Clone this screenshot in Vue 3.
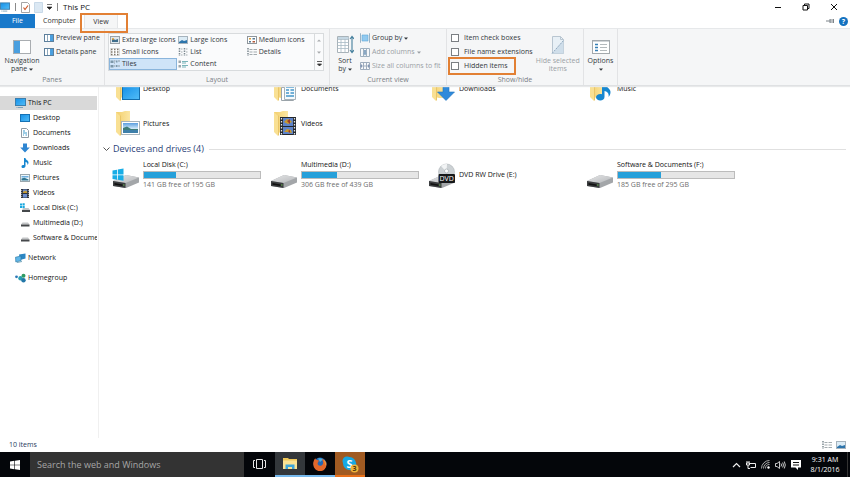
<script setup>
import { ref } from 'vue'

const layouts = ['Extra large icons', 'Large icons', 'Medium icons', 'Small icons', 'List', 'Details', 'Tiles', 'Content']
const layoutIcons = ['pic', 'pic2', 'med', 'small', 'list', 'details', 'tiles', 'content']
const selected = ref('Tiles')

const toggles = ref([
  { label: 'Item check boxes', on: false },
  { label: 'File name extensions', on: false },
  { label: 'Hidden items', on: false, marked: true },
])

const places = [
  { name: 'Desktop', icon: 'desktop' },
  { name: 'Documents', icon: 'document' },
  { name: 'Downloads', icon: 'download' },
  { name: 'Music', icon: 'music' },
  { name: 'Pictures', icon: 'picture' },
  { name: 'Videos', icon: 'video' },
]
const sideDrives = [
  { name: 'Local Disk (C:)', icon: 'windisk' },
  { name: 'Multimedia (D:)', icon: 'disk' },
  { name: 'Software & Documents (F:)', icon: 'disk' },
]
const drives = [
  { name: 'Local Disk (C:)', icon: 'winhdd', free: 141, total: 195 },
  { name: 'Multimedia (D:)', icon: 'hdd', free: 306, total: 439 },
  { name: 'DVD RW Drive (E:)', icon: 'dvd' },
  { name: 'Software & Documents (F:)', icon: 'hdd', free: 185, total: 295 },
]
const used = (d) => Math.round((1 - d.free / d.total) * 100) + '%'
const search = ref('')
</script>

<template>
  <svg class="defs" aria-hidden="true">
    <defs>
      <linearGradient id="gScreen" x1="0" y1="0" x2="1" y2="1">
        <stop offset="0" stop-color="#1590e8" /><stop offset="1" stop-color="#52bdf7" />
      </linearGradient>
      <linearGradient id="gFolder" x1="0" y1="0" x2="1" y2="0">
        <stop offset="0" stop-color="#f3cf6c" /><stop offset="1" stop-color="#fbe6a3" />
      </linearGradient>
      <linearGradient id="gMetal" x1="0" y1="0" x2="1" y2="1">
        <stop offset="0" stop-color="#e6e7e8" /><stop offset="1" stop-color="#b5b7ba" />
      </linearGradient>
      <linearGradient id="gSky" x1="0" y1="0" x2="0" y2="1">
        <stop offset="0" stop-color="#5b9ede" /><stop offset=".6" stop-color="#d8eefb" />
      </linearGradient>
    </defs>
    <symbol id="pc" viewBox="0 0 11 10">
      <rect x=".5" y=".5" width="10" height="7" fill="url(#gScreen)" stroke="#3b7fae" />
      <path d="M3 9.500h5M1.500 9.500h1" stroke="#7da3bb" />
    </symbol>
    <symbol id="desktop" viewBox="0 0 10 10">
      <rect x=".5" y="1.500" width="9" height="7" fill="url(#gScreen)" stroke="#1672b5" />
    </symbol>
    <symbol id="document" viewBox="0 0 10 10">
      <path d="M1.500.5h5l2 2v7h-7z" fill="#fff" stroke="#8f9aa3" />
      <path d="M3 3h2M3 5h4M3 7h1M5.500 7H7" stroke="#3a9acb" stroke-width="1.200" />
    </symbol>
    <symbol id="download" viewBox="0 0 10 10">
      <path d="M3 .5h4V4.500H9.800L5 9.500.2 4.500H3z" fill="#2e86d2" />
    </symbol>
    <symbol id="music" viewBox="0 0 10 10">
      <path d="M4 0h1.500c0 2 3 2.200 3 4.500 0 1-.5 2-1 2.500.2-2-.8-2.700-2-3v4C5.500 9.300 4.500 10 3.300 10S1.500 9.300 1.500 8.400 2.600 6.800 4 7z" fill="#1787d0" />
    </symbol>
    <symbol id="picture" viewBox="0 0 10 10">
      <rect x=".5" y="1.500" width="9" height="7" fill="#eef7fc" stroke="#9aa7ad" />
      <path d="M1.500 3h7v1.500h-7z" fill="#6faede" /><path d="M1.500 5.500l3-.8 4 1.800v1h-7z" fill="#2e7590" />
    </symbol>
    <symbol id="video" viewBox="0 0 10 10">
      <path d="M1 1h8v9H1z" fill="#2e3440" /><path d="M3 1.500h4V5H3zM3 6h4v3.500H3z" fill="#6d8fd1" />
      <path d="M3 4l2-1.500 2 1V5H3z" fill="#c79c33" /><path d="M1.700 2v8M8.300 2v8" stroke="#d5d5d5" stroke-width=".8" stroke-dasharray="1 1" />
    </symbol>
    <symbol id="disk" viewBox="0 0 10 10">
      <path d="M2.500 4.500h5.500l1.500 2H1z" fill="#c3c5c7" /><path d="M1 6.500h8.500v2H1z" fill="#45484b" />
    </symbol>
    <symbol id="windisk" viewBox="0 0 10 10">
      <path d="M0 .5h2v2H0zM2.500.2h2.200v2.300H2.500zM0 3h2v2H0zM2.500 3h2.200v2.200H2.500z" fill="#17a7de" />
      <path d="M3.500 5h5L10 7H2z" fill="#c3c5c7" /><path d="M2 7h8v2H2z" fill="#45484b" />
    </symbol>
    <symbol id="network" viewBox="0 0 11 10">
      <path d="M4 1.500L10.500.5v5L5 7z" fill="#2b86c4" /><path d="M.5 4.200L6 3v4.800L.8 9z" fill="#5fb6e8" stroke="#24739f" stroke-width=".6" />
      <path d="M2 9.500l5-1" stroke="#78a8bd" />
    </symbol>
    <symbol id="homegroup" viewBox="0 0 11 10">
      <circle cx="1.500" cy="3.800" r="1.400" fill="#2e79b8" /><circle cx="5.500" cy="5.200" r="2.200" fill="#2a9fb0" />
      <circle cx="8.500" cy="2.800" r="2" fill="#2f9b62" /><circle cx="8.500" cy="7.300" r="2.200" fill="#2377a8" />
    </symbol>

    <symbol id="folder" viewBox="0 0 28 28">
      <path d="M4 2h6l3-1h5v22l-7 0-7-2z" fill="url(#gFolder)" />
      <path d="M4 2l4 4v20l-4-4z" fill="#f9e093" /><path d="M8 6l1-1v20l-1 1z" fill="#e9c568" />
    </symbol>
    <symbol id="b-desktop" viewBox="0 0 28 28">
      <use href="#folder" /><rect x="10.500" y="11.500" width="17" height="13" fill="url(#gScreen)" stroke="#136eae" />
    </symbol>
    <symbol id="b-document" viewBox="0 0 28 28">
      <use href="#folder" /><path d="M11.500 12.500h12v13h-12z" fill="#fff" stroke="#9aa3a9" /><path d="M14.500 9.500h11v15h-11z" fill="#f5fafc" stroke="#a7b2b9" />
      <path d="M16 12h8M16 15h3M20.500 15H24M16 18h3M20.500 18H24M16 21h8" stroke="#4596c9" stroke-width="1.300" />
    </symbol>
    <symbol id="b-download" viewBox="0 0 28 28">
      <use href="#folder" /><path d="M15 10h6v7h5.500l-8.500 8.500-8.500-8.500H15z" fill="#2f8adb" stroke="#1f72bd" stroke-width=".6" />
    </symbol>
    <symbol id="b-music" viewBox="0 0 28 28">
      <use href="#folder" /><path d="M16 8h2.500c.5 4 6 5 6 9 0 2-.8 4-2 5 .8-3.500-1-5.500-4-6v6c0 2-1.900 3.500-4.200 3.500S10 24.200 10 22.300s2.500-3.800 6-3z" fill="#1787d0" />
    </symbol>
    <symbol id="b-picture" viewBox="0 0 28 28">
      <use href="#folder" /><rect x="9.500" y="11.500" width="18" height="13" fill="#fff" stroke="#a8b4bb" />
      <path d="M11 13h15v10H11z" fill="url(#gSky)" /><path d="M11 18l4-1.500 4 2.500 7 0v1H11z" fill="#3f7d78" /><path d="M11 20h15v3H11z" fill="#3e7fa9" />
    </symbol>
    <symbol id="b-video" viewBox="0 0 28 28">
      <use href="#folder" /><path d="M10 7h16v18H10z" fill="#23272d" /><path d="M13 8h10v8H13zM13 17h10v7H13z" fill="#5d83ca" />
      <path d="M14 12l3-3 3 1 2 2-4 2zM14 22l3-3 4 1 1 3-5-1z" fill="#c99a2d" /><path d="M17 11l3-2v5zM18 21l2-1v3z" fill="#9b3b2d" />
      <path d="M11.500 8v17M24.500 8v17" stroke="#e7e7e7" stroke-width="1.300" stroke-dasharray="1.500 1.500" />
    </symbol>
    <symbol id="hdd" viewBox="0 0 28 28">
      <path d="M1 20l13-6 13 2.500v5L14 27 1 25z" fill="#a3a6a9" /><path d="M1 20l13-6 13 2.500L13.500 22z" fill="url(#gMetal)" />
      <path d="M1 20l12.500 2v5L1 25z" fill="#3b3d3f" /><path d="M2.500 22l8 1.400v1.600l-8-1.200z" fill="#111" /><path d="M11 24h1.500" stroke="#6ad14d" stroke-width=".8" />
    </symbol>
    <symbol id="winhdd" viewBox="0 0 28 28">
      <use href="#hdd" />
      <path d="M.5 9.500l4.500-.8v4.800H.5zM5.800 8.500l5.700-1v6H5.800zM.5 14.300H5v4.500L.5 18zM5.800 14.300h5.700v5.500l-5.700-1z" fill="#18ade6" />
    </symbol>
    <symbol id="dvd" viewBox="0 0 28 28">
      <use href="#hdd" />
      <circle cx="18.500" cy="11" r="8" fill="#ccd1d4" stroke="#b0b5b8" stroke-width=".6" /><path d="M18.500 11L13 5a8 8 0 0 1 6-2z" fill="#f2f4f5" />
      <circle cx="18.500" cy="10" r="2" fill="#fff" stroke="#9ba3a8" stroke-width=".6" />
      <rect x="10.500" y="13" width="16.500" height="9" rx="1" fill="#16181a" />
      <text x="18.700" y="20.200" text-anchor="middle" font-size="7" fill="#fff" font-family="Open Sans, sans-serif">DVD</text>
    </symbol>

    <symbol id="navpane" viewBox="0 0 18 14">
      <rect x=".5" y=".5" width="17" height="13" fill="#fff" stroke="#a9adb1" /><path d="M1 1h6v12H1z" fill="#4a9fdf" />
    </symbol>
    <symbol id="preview" viewBox="0 0 10 8">
      <rect x=".5" y=".5" width="9" height="7" fill="#fff" stroke="#5c7f9c" /><path d="M6 1h3v6H6z" fill="#4a9fdf" /><path d="M3.500 1v6" stroke="#8fa9bc" />
    </symbol>
    <symbol id="pic" viewBox="0 0 10 8">
      <rect x=".5" y=".5" width="9" height="7" fill="#dfe7ec" stroke="#9aa2a8" /><path d="M2 6V3h2l1 1 3-1v3z" fill="#3f6e8c" /><circle cx="3" cy="3" r="1" fill="#d89d37" />
    </symbol>
    <symbol id="pic2" viewBox="0 0 10 8">
      <rect x=".5" y=".5" width="9" height="7" fill="#dcecf6" stroke="#a6b3bd" /><path d="M1 6l3-2 2 1 3-1v3H1z" fill="#2c74ab" />
    </symbol>
    <symbol id="med" viewBox="0 0 10 8">
      <rect x=".5" y=".5" width="9" height="7" fill="#fff" stroke="#8e969c" /><path d="M2 2h2v1.500H2z" fill="#d89d37" /><path d="M5.500 2H8v1.500H5.500zM2 5h2v1.500H2z" fill="#587b93" /><path d="M5.500 5H8v1.500H5.500z" fill="#b45a3a" />
    </symbol>
    <symbol id="small" viewBox="0 0 10 8">
      <path d="M.5.5h9v7h-9z" fill="#fff" stroke="#bbb" stroke-width=".5" /><path d="M1 1.500h9M1 4h9M1 6.500h9" stroke="#7d7568" stroke-width="1.500" stroke-dasharray="1.500 1.500" />
    </symbol>
    <symbol id="list" viewBox="0 0 10 8">
      <path d="M1.500 0v8M6.500 0v8" stroke="#7c8990" stroke-width="1.500" stroke-dasharray="1.500 1" /><path d="M3 1h1.500M3 4h1.500M3 7h1.500M8 1h1.500M8 4h1.500M8 7h1.500" stroke="#a3abaf" />
    </symbol>
    <symbol id="details" viewBox="0 0 10 8">
      <path d="M1 0v8" stroke="#7c8990" stroke-width="1.500" stroke-dasharray="1.500 1" /><path d="M2.500 1.500h3M2.500 4h3M2.500 6.500h3M6.500 1.500H10M6.500 4H10M6.500 6.500H10" stroke="#a3abaf" />
    </symbol>
    <symbol id="tiles" viewBox="0 0 10 8">
      <path d="M.5.5h3v2.500h-3zM.5 5h3v2.500h-3zM6 .5h1.500v2H6zM6 5h1.500v2H6z" fill="#7c97a8" /><path d="M4 1h1.500M4 3h1M4 6h1.500M8 1h2M8 6h2" stroke="#8d9aa1" />
    </symbol>
    <symbol id="content" viewBox="0 0 10 8">
      <path d="M.5.5H3V3H.5zM.5 5H3v2.500H.5z" fill="#9ba7ae" /><path d="M4 1.500h6M4 3h4M4 5.500h6M4 7h4" stroke="#59a3a8" stroke-width=".8" />
    </symbol>
    <symbol id="sort" viewBox="0 0 18 20">
      <path d="M1.500 1.500h11v16h-11z" fill="#fff" stroke="#a8b2b8" /><path d="M1.500 4.500h11M1.500 7.500h11M1.500 10.500h11M1.500 13.500h11M5 1.500v16M9 1.500v16" stroke="#a8bac5" stroke-width=".8" />
      <path d="M2 2h10.500v2H2z" fill="#c5d7e3" /><path d="M16 2v15M14 4l2-2.500L18 4M14 15l2 2.500 2-2.500" fill="none" stroke="#447f9d" stroke-width="1.100" />
    </symbol>
    <symbol id="group" viewBox="0 0 10 10">
      <path d="M1 .5H.5v9H1M9 .5h.5v9H9" fill="none" stroke="#9bb4c6" /><path d="M2 2h6v6H2z" fill="#92caf0" stroke="#5ea8d8" stroke-width=".6" />
    </symbol>
    <symbol id="addcol" viewBox="0 0 10 10">
      <path d="M.5 1.500h9v8h-9zM3.500 1v8M6.500 1v8" fill="#f6f8fa" stroke="#9fb1c0" /><path d="M4 3h2v3h1L5 8.500 3 6h1z" fill="#8aa8c4" />
    </symbol>
    <symbol id="sizecol" viewBox="0 0 10 10">
      <path d="M.5 1.500h9v7h-9zM3.500 1v8M6.500 1v8M1 5h9" fill="#f6f8fa" stroke="#9fadbd" /><path d="M0 5l2-2v4zM10 5L8 3v4z" fill="#8396b4" />
    </symbol>
    <symbol id="hide" viewBox="0 0 16 20">
      <path d="M2.500 1.500h8l3 3v14h-11z" fill="#e8f0f6" stroke="#b9c6d1" /><path d="M2.500 18L13.500 5v13.500h-11z" fill="#cfdeea" /><path d="M2 18.500L14 5" stroke="#91a9bf" stroke-dasharray="2 1" />
      <path d="M10.500 1.500v3h3" fill="none" stroke="#b9c6d1" />
    </symbol>
    <symbol id="options" viewBox="0 0 18 14">
      <rect x=".5" y=".5" width="17" height="13" fill="#fff" stroke="#a3a9ad" /><path d="M1 1.500h16" stroke="#d1d5d8" /><path d="M3 4.500h3M3 7.500h3M3 10.500h3" stroke="#377fb5" stroke-width="1.600" /><path d="M8 4.500h7M8 7.500h7M8 10.500h7" stroke="#b4babd" />
    </symbol>
    <symbol id="caret" viewBox="0 0 4 3"><path d="M0 .5h4L2 2.700z" fill="currentColor" /></symbol>
  </svg>

  <div class="window">
    <header class="title">
      <svg class="i-pc"><use href="#pc" /></svg>
      <i class="bar"></i>
      <button class="plain" aria-label="Properties">
        <svg width="9" height="11" viewBox="0 0 9 11"><path d="M.5.5h6l2 2v8h-8z" fill="#fff" stroke="#a5a5a5" /><path d="M2.500 5.500l1.500 2L7 3.500" fill="none" stroke="#cf5a2a" stroke-width="1.200" /></svg>
      </button>
      <button class="plain" aria-label="New folder">
        <svg width="9" height="11" viewBox="0 0 9 11"><path d="M.5.5h8v10h-8z" fill="#dbe8f3" stroke="#c8d9e8" /></svg>
      </button>
      <button class="plain" aria-label="Customize toolbar">
        <svg width="5" height="6" viewBox="0 0 5 6"><path d="M0 .5h5M0 3h5L2.500 5.500z" stroke="#222" stroke-width=".6" fill="#222" /></svg>
      </button>
      <i class="bar"></i>
      <h1>This PC</h1>
      <nav class="sys">
        <button class="plain" aria-label="Minimize"><svg width="8" height="8" viewBox="0 0 8 8"><path d="M1 4.500h6" stroke="#111" /></svg></button>
        <button class="plain" aria-label="Restore"><svg width="8" height="8" viewBox="0 0 8 8"><path d="M1 2.500h4.500v4.500H1zM2.500 2.500v-1.500H7v4.500H5.500" fill="none" stroke="#111" /></svg></button>
        <button class="plain" aria-label="Close"><svg width="8" height="8" viewBox="0 0 8 8"><path d="M1 1l6 6M7 1L1 7" stroke="#111" /></svg></button>
      </nav>
    </header>

    <nav class="tabs">
      <button class="tab file">File</button>
      <button class="tab computer">Computer</button>
      <div class="view-wrap"><button class="tab view">View</button><span class="mark"></span></div>
      <div class="help">
        <button class="plain" aria-label="Pin ribbon"><svg width="8" height="6" viewBox="0 0 8 6"><path d="M0 3h4M4 1v4M4 2h3.500v2H4M7.500 1v4" fill="none" stroke="#7d848a" /></svg></button>
        <button class="plain" aria-label="Help"><svg width="9" height="9" viewBox="0 0 9 9"><circle cx="4.500" cy="4.500" r="4.500" fill="#1472c0" /><text x="4.500" y="7" font-size="7" font-weight="700" text-anchor="middle" fill="#fff" font-family="Open Sans, sans-serif">?</text></svg></button>
      </div>
    </nav>

    <section class="ribbon">
      <div class="group g-panes">
        <div class="body">
          <button class="big"><svg class="w18"><use href="#navpane" /></svg><span>Navigation<br />pane <svg class="caret"><use href="#caret" /></svg></span></button>
          <div class="stack panes">
            <button class="row"><svg class="w10"><use href="#preview" /></svg>Preview pane</button>
            <button class="row"><svg class="w10"><use href="#preview" /></svg>Details pane</button>
          </div>
        </div>
        <h2>Panes</h2>
      </div>
      <div class="group g-layout">
        <div class="body">
          <div class="gallery">
            <div class="options">
              <button v-for="(l, n) in layouts" :key="l" :class="['row', { on: selected === l }]" @click="selected = l">
                <svg class="w10"><use :href="'#' + layoutIcons[n]" /></svg>{{ l }}
              </button>
            </div>
            <div class="scroller">
              <button class="plain" aria-label="Scroll up"><svg width="4" height="3" viewBox="0 0 4 3"><path d="M0 2.500h4L2 .5z" fill="#a8abad" /></svg></button>
              <button class="plain" aria-label="Scroll down"><svg class="caret dim"><use href="#caret" /></svg></button>
              <button class="plain" aria-label="More layouts"><svg width="5" height="6" viewBox="0 0 5 6"><path d="M0 .5h5M.5 3h4L2.500 5z" stroke="#333" stroke-width=".8" fill="#333" /></svg></button>
            </div>
          </div>
        </div>
        <h2>Layout</h2>
      </div>
      <div class="group g-current">
        <div class="body">
          <button class="big sort"><svg class="w18 tall"><use href="#sort" /></svg><span>Sort<br />by <svg class="caret"><use href="#caret" /></svg></span></button>
          <div class="stack">
            <button class="row"><svg class="s10"><use href="#group" /></svg>Group by <svg class="caret"><use href="#caret" /></svg></button>
            <button class="row" disabled><svg class="s10"><use href="#addcol" /></svg>Add columns <svg class="caret"><use href="#caret" /></svg></button>
            <button class="row" disabled><svg class="s10"><use href="#sizecol" /></svg>Size all columns to fit</button>
          </div>
        </div>
        <h2>Current view</h2>
      </div>
      <div class="group g-show">
        <div class="body">
          <div class="stack checks">
            <label v-for="t in toggles" :key="t.label" class="check"><input v-model="t.on" type="checkbox" />{{ t.label }}<span v-if="t.marked" class="mark"></span></label>
          </div>
          <button class="big hide" disabled><svg class="w16 tall"><use href="#hide" /></svg><span>Hide selected<br />items</span></button>
        </div>
        <h2>Show/hide</h2>
      </div>
      <div class="group g-options">
        <div class="body">
          <button class="big"><svg class="w18"><use href="#options" /></svg><span>Options<br /><svg class="caret"><use href="#caret" /></svg></span></button>
        </div>
      </div>
    </section>

    <div class="explorer">
      <aside class="side">
        <a href="#" class="current"><svg class="w11"><use href="#pc" /></svg>This PC</a>
        <a v-for="p in [...places, ...sideDrives]" :key="p.name" href="#" class="child"><svg class="s10"><use :href="'#' + p.icon" /></svg>{{ p.name }}</a>
        <a href="#" class="root"><svg class="w11"><use href="#network" /></svg>Network</a>
        <a href="#" class="root"><svg class="w11"><use href="#homegroup" /></svg>Homegroup</a>
      </aside>
      <main class="content">
        <div class="tiles folders">
          <a v-for="p in places" :key="p.name" href="#" class="tile"><svg class="s28"><use :href="'#b-' + p.icon" /></svg>{{ p.name }}</a>
        </div>
        <h3><svg width="7" height="5" viewBox="0 0 7 5"><path d="M.5.5l3 3 3-3" fill="none" stroke="#555" /></svg>Devices and drives (4)<i></i></h3>
        <div class="tiles">
          <a v-for="d in drives" :key="d.name" href="#" class="tile drive">
            <svg class="s28"><use :href="'#' + d.icon" /></svg>
            <span class="info">
              <span>{{ d.name }}</span>
              <template v-if="d.total">
                <span class="meter"><span :style="{ width: used(d) }"></span></span>
                <span class="free">{{ d.free }} GB free of {{ d.total }} GB</span>
              </template>
            </span>
          </a>
        </div>
      </main>
    </div>

    <div class="status">
      <span>10 items</span>
      <div>
        <button class="plain" aria-label="Details view"><svg class="w10"><use href="#details" /></svg></button>
        <button class="plain active" aria-label="Large icons view"><svg class="w10"><use href="#pic2" /></svg></button>
      </div>
    </div>

    <footer class="taskbar">
      <button class="task" aria-label="Start"><svg width="10" height="10" viewBox="0 0 10 10"><path d="M0 1.400l4.400-.6v3.900H0zM5 .7l5-.7v4.700H5zM0 5.300h4.400v3.900L0 8.600zM5 5.300h5V10l-5-.7z" fill="#fff" /></svg></button>
      <input v-model="search" class="search" type="text" placeholder="Search the web and Windows" aria-label="Search the web and Windows" />
      <button class="task" aria-label="Task view"><svg width="13" height="10" viewBox="0 0 13 10"><path d="M3.500.5h6v9h-6zM2 1.500H.5v7H2M11 1.500h1.500v7H11" fill="none" stroke="#e8e8e8" /></svg></button>
      <button class="task open" aria-label="File Explorer"><svg width="14" height="13" viewBox="0 0 14 13"><path d="M0 1h5l1 1h8v10H0z" fill="#f0c859" /><path d="M0 3.500h14V12H0z" fill="#fbe394" /><path d="M2.500 12V7.500h9V12h-2.500V10H5v2z" fill="#3ea6da" /></svg></button>
      <button class="task run" aria-label="Firefox"><svg width="14" height="14" viewBox="0 0 14 14"><circle cx="7" cy="7" r="6.500" fill="#2668b4" /><path d="M5 1.500a5 5 0 0 1 5 1L7 5z" fill="#4bb3e3" /><path d="M.6 4.500C1 3 1.600 2 2.500 1.300c0 1 .5 1.500 1.500 1.700l2 .5-1 2c-1 .8-.2 3.500 2.500 3.200 2-.2 3-2 2.500-4C9.500 3 9 2.500 9 2c3 1 4.700 3 4.500 5.500A6.600 6.600 0 0 1 .3 7.600C.2 6.500.3 5.500.6 4.500z" fill="#e4682a" /><path d="M10.500 2.500c2 1.500 2.800 4 1.500 6.500.3-2-.2-4.500-1.500-6.500z" fill="#f8c445" /></svg></button>
      <button class="task alert" aria-label="Skype"><svg width="18" height="18" viewBox="0 0 18 18"><circle cx="6" cy="6" r="4.500" fill="#16a9e5" /><circle cx="10.500" cy="10.500" r="5" fill="#16a9e5" /><circle cx="8.500" cy="8.500" r="6.500" fill="#16a9e5" /><text x="8.500" y="12.500" font-size="11" font-weight="700" text-anchor="middle" fill="#fff" font-family="Open Sans, sans-serif">S</text><circle cx="13.500" cy="13.500" r="4" fill="#f0b43a" /><text x="13.500" y="16" font-size="7" font-weight="700" text-anchor="middle" fill="#4b3510" font-family="Open Sans, sans-serif">3</text></svg></button>
      <div class="tray">
        <svg width="9" height="6" viewBox="0 0 9 6"><path d="M1 5l3.500-3.500L8 5" fill="none" stroke="#eee" stroke-width="1.200" /></svg>
        <svg width="10" height="8" viewBox="0 0 10 8"><path d="M3.500 2.500h6v4h-5M1 0v2M3 0v2M.5 2h3v2h-3zM2 4v3.500h2" fill="none" stroke="#eee" /></svg>
        <svg width="9" height="9" viewBox="0 0 9 9"><path d="M.5 8.500a8 8 0 0 1 8-8M2.500 8.500a6 6 0 0 1 6-6M4.500 8.500a4 4 0 0 1 4-4" fill="none" stroke="#aaa" /><circle cx="7.500" cy="7.500" r="1.200" fill="#fff" /></svg>
        <svg width="11" height="8" viewBox="0 0 11 8"><path d="M.5 2.500H2L4.500.5v7L2 5.500H.5zM6 2.500q1 1.500 0 3M7.700 1.500q1.500 2.500 0 5M9.300.5q2 3.500 0 7" fill="none" stroke="#ddd" stroke-width=".9" /></svg>
        <svg width="10" height="10" viewBox="0 0 10 10"><path d="M0 0h10v7.500H7V10L4.500 7.500H0z" fill="#fff" /><path d="M2 2.500h6M2 5h6" stroke="#111" /></svg>
        <time>9:31 AM<br />8/1/2016</time>
      </div>
    </footer>
  </div>
</template>

<style>
body { background: #fff; }
</style>

<style scoped>
.window { display: flex; flex-direction: column; height: 100vh; overflow: hidden; background: #fff; color: #111; font: 7px/10px "Open Sans", "Noto Sans", sans-serif; }
.window *, .window *::before { box-sizing: border-box; }
.defs { position: absolute; width: 0; height: 0; }
button { display: flex; align-items: center; justify-content: center; margin: 0; padding: 0; border: 0; background: none; color: inherit; font: inherit; }
svg { flex: none; }
a { color: inherit; text-decoration: none; }
h1, h2, h3 { margin: 0; font: inherit; }
.w10 { width: 10px; height: 8px; }
.s10 { width: 10px; height: 10px; }
.w11 { width: 11px; height: 10px; }
.w16 { width: 16px; height: 14px; }
.w18 { width: 18px; height: 14px; }
.s28 { width: 28px; height: 28px; }
.w16.tall, .w18.tall { height: 20px; }
.caret { width: 4px; height: 3px; vertical-align: middle; }
.dim { color: #a8abad; }
.mark { position: absolute; border: 2px solid #e28034; pointer-events: none; }

.title { flex: none; display: flex; align-items: center; height: 14px; gap: 4px; }
.i-pc { width: 10px; height: 10px; }
.title .bar { width: 1px; height: 8px; margin: 0 1px; background: #8a8a8a; }
.title h1 { font-size: 8px; }
.sys { display: flex; gap: 20px; margin-left: auto; padding-right: 12px; }

.tabs { flex: none; display: flex; height: 14px; }
.tab { height: 14px; color: #333; }
.tab.file { width: 35px; background: #1979ca; color: #fff; }
.tab.computer { width: 49px; }
.view-wrap { position: relative; }
.tab.view { width: 34px; border: 1px solid #e3e5e7; border-bottom: 0; background: #f5f6f7; }
.view-wrap .mark { inset: -1px -10px -5px -4px; z-index: 1; }
.help { display: flex; align-items: center; gap: 5px; margin-left: auto; padding-right: 2px; }

.ribbon { position: relative; z-index: 0; flex: none; display: flex; height: 58px; border-top: 1px solid #e6e8ea; border-bottom: 1px solid #dfe1e3; background: #f5f6f7; box-shadow: 0 1px 1px #e8e9ea; color: #33383d; }
.group { display: flex; flex-direction: column; padding-top: 2px; border-right: 1px solid #e2e3e5; }
.group .body { flex: 1; display: flex; align-items: flex-start; min-height: 0; }
.group h2 { height: 10px; color: #7a8086; text-align: center; }
.g-panes { width: 105px; }
.g-layout { width: 225px; }
.g-current { width: 117px; }
.g-show { width: 137px; }
.g-options { width: 34px; }
.big { flex-direction: column; justify-content: flex-end; gap: 3px; height: 42px; line-height: 8px; }
.big .tall { margin-bottom: -1px; }
.g-panes .big { width: 44px; }
.sort { width: 30px; }
.g-options .big { width: 100%; }
.hide { width: 56px; margin-left: auto; }
button:disabled { color: #9a9fa5; }
.stack { display: flex; flex-direction: column; }
.row { justify-content: flex-start; gap: 2px; height: 14px; white-space: nowrap; }
.gallery { display: flex; width: 216px; height: 38px; margin: 2px 0 0 3px; border: 1px solid #d8dbdd; background: #fafbfc; }
.options { flex: 1; display: grid; grid-template-columns: repeat(3, 1fr); grid-template-rows: repeat(3, 12px); }
.options .row { height: 12px; padding-left: 1px; }
.options .row.on { border: 1px solid #8ab5dc; background: #cfe4f8; padding-left: 0; }
.scroller { display: grid; grid-template-rows: repeat(3, 12px); width: 9px; border-left: 1px solid #d8dbdd; }
.checks { padding-left: 4px; }
.check { position: relative; display: flex; align-items: center; gap: 5px; height: 14px; white-space: nowrap; }
.check input { appearance: none; width: 8px; height: 8px; margin: 0; border: 1px solid #7b7f83; background: #fff; }
.check input:checked { background: #1979ca; }
.check .mark { inset: -2px auto -2px -3px; width: 68px; }

.explorer { flex: 1; display: flex; min-height: 0; }
.side { flex: none; width: 99px; padding: 10px 1px 0 0; border-right: 1px solid #f0f0f0; overflow: hidden; }
.side a { display: flex; align-items: center; gap: 3px; height: 15px; padding-left: 15px; white-space: nowrap; overflow: hidden; }
.side .child { padding-left: 20px; }
.side .current { height: 14px; gap: 2px; background: #d9d9d9; }
.side .root { gap: 2px; margin-top: 5px; }
.content { flex: 1; min-width: 0; padding: 0 4px; overflow: hidden; }
.tiles { display: grid; grid-template-columns: repeat(auto-fill, 158px); padding-left: 9px; }
.folders { margin-top: -15px; }
.tile { display: flex; align-items: center; gap: 3px; height: 35px; }
h3 { display: flex; align-items: center; gap: 3px; height: 16px; color: #2c3f78; font-size: 9px; line-height: 16px; }
h3 i { flex: 1; height: 1px; margin-left: 2px; background: #e0e0e0; }
.info { display: flex; flex-direction: column; width: 118px; }
.meter { height: 8px; margin: 1px 0; border: 1px solid #bcbcbc; background: #e6e6e6; }
.meter span { display: block; height: 100%; background: #26a0da; }
.free { color: #6d6d6d; }

.status { flex: none; display: flex; align-items: center; justify-content: space-between; height: 14px; padding: 0 4px 0 9px; color: #1e395b; }
.status div { display: flex; gap: 4px; }
.active { background: #cce8ff; }

.taskbar { flex: none; display: flex; height: 25px; background: #04060a; color: #fff; }
.task { width: 30px; border-bottom: 2px solid transparent; }
.task:first-child { border: 0; }
.search { flex: none; width: 214px; padding: 0 7px; border: 0; background: #333; color: #fff; font: 9px/12px "Open Sans", "Noto Sans", sans-serif; outline: 0; }
.search::placeholder { color: #a6a6a6; opacity: 1; }
.open { margin-left: 1px; background: #33373b; border-color: #76b9ed; }
.run { border-color: #76b9ed; }
.alert { background: #a05a22; border-color: #e8701a; }
.tray { display: flex; align-items: center; gap: 5px; margin: 0 2px 0 auto; padding-right: 3px; border-right: 1px solid #333; }
.tray time { width: 38px; line-height: 10px; text-align: center; }
</style>
